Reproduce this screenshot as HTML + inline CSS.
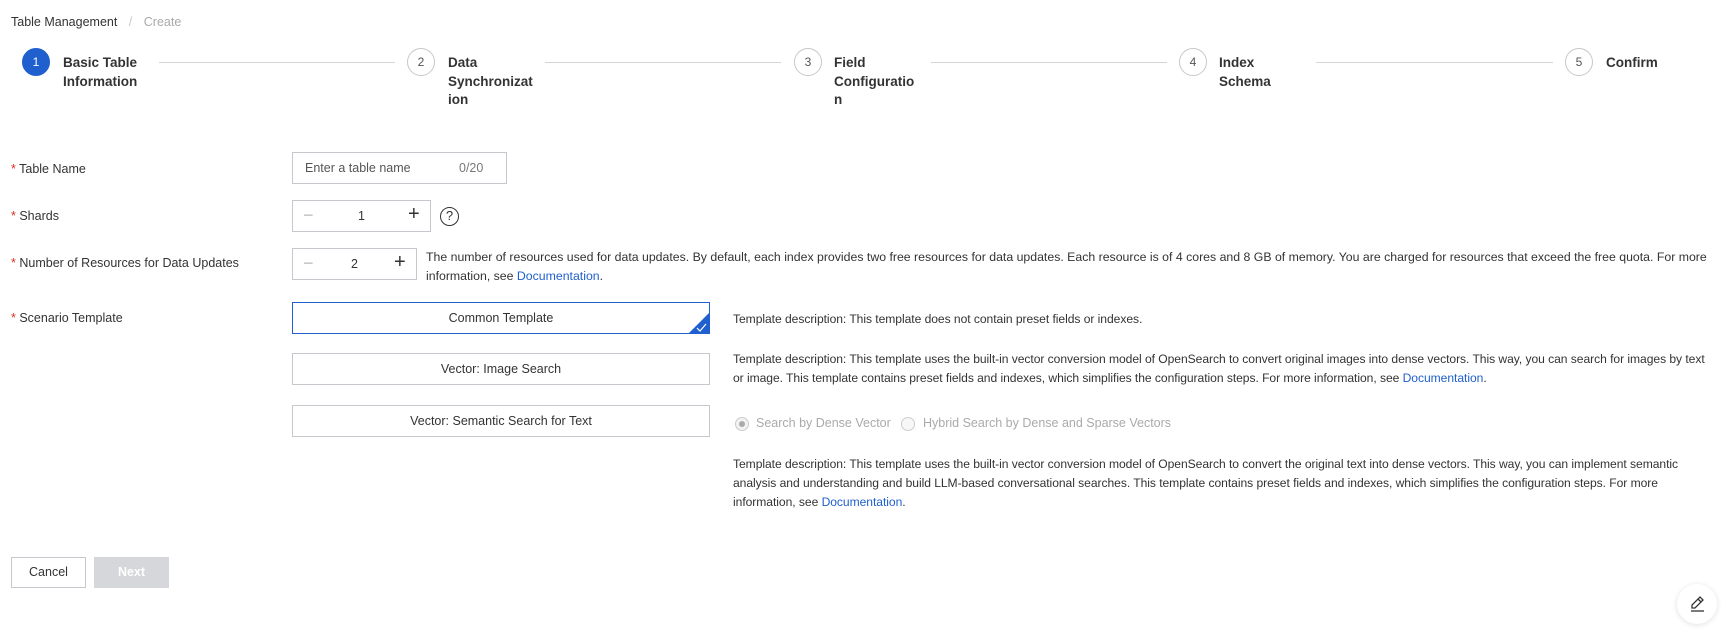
<!DOCTYPE html>
<html><head><meta charset="utf-8"><style>
*{box-sizing:border-box;margin:0;padding:0}
body{width:1721px;height:631px;background:#fff;font-family:"Liberation Sans",sans-serif;color:#333;position:relative;overflow:hidden;font-size:12px}
.a{position:absolute;white-space:nowrap}
.circ{position:absolute;width:28px;height:28px;border-radius:50%;border:1px solid #c8c8c8;color:#555;font-size:12px;text-align:center;line-height:26px;background:#fff}
.circ.on{background:#1f5fce;border-color:#1f5fce;color:#fff}
.st{position:absolute;font-size:13.5px;font-weight:bold;color:#333;line-height:18.6px}
.ln{position:absolute;height:1px;background:#d5d5d5;top:62px}
.lbl{position:absolute;left:11px;font-size:12.5px;color:#333;line-height:16px}
.lbl b{color:#d93026;font-weight:normal}
.box{position:absolute;border:1px solid #c5c8cc;background:#fff}
.tpl{position:absolute;left:292px;width:418px;height:32px;border:1px solid #c5c8cc;text-align:center;line-height:30px;font-size:12.5px;color:#333}
.d{position:absolute;left:733px;font-size:12.1px;line-height:19px;letter-spacing:-0.05px;white-space:nowrap;color:#333}
.lk{color:#1f5fce}
</style></head><body>
<div class="a" style="left:11px;top:15px;font-size:12.5px;color:#333">Table Management <span style="color:#c8c8c8;margin:0 8px">/</span> <span style="color:#aaa">Create</span></div>

<div class="circ on" style="left:22px;top:48px">1</div>
<div class="st" style="left:63px;top:54px">Basic Table<br>Information</div>
<div class="ln" style="left:159px;width:236px"></div>
<div class="circ" style="left:407px;top:48px">2</div>
<div class="st" style="left:448px;top:54px">Data<br>Synchronizat<br>ion</div>
<div class="ln" style="left:545px;width:236px"></div>
<div class="circ" style="left:794px;top:48px">3</div>
<div class="st" style="left:834px;top:54px">Field<br>Configuratio<br>n</div>
<div class="ln" style="left:931px;width:236px"></div>
<div class="circ" style="left:1179px;top:48px">4</div>
<div class="st" style="left:1219px;top:54px">Index<br>Schema</div>
<div class="ln" style="left:1316px;width:237px"></div>
<div class="circ" style="left:1565px;top:48px">5</div>
<div class="st" style="left:1606px;top:54px">Confirm</div>

<div class="lbl" style="top:161px"><b>*</b> Table Name</div>
<div class="lbl" style="top:208px"><b>*</b> Shards</div>
<div class="lbl" style="top:255px"><b>*</b> Number of Resources for Data Updates</div>
<div class="lbl" style="top:310px"><b>*</b> Scenario Template</div>

<div class="box" style="left:292px;top:152px;width:215px;height:32px"></div>
<div class="a" style="left:305px;top:161px;font-size:12.5px;color:#555">Enter a table name</div>
<div class="a" style="left:459px;top:161px;font-size:12.5px;color:#777">0/20</div>

<div class="box" style="left:292px;top:200px;width:139px;height:32px"></div>
<div class="a" style="left:303px;top:205px;font-size:18px;color:#bbb">−</div>
<div class="a" style="left:358px;top:209px;font-size:12.5px">1</div>
<div class="a" style="left:408px;top:203px;font-size:20px;color:#333">+</div>
<div class="a" style="left:440px;top:207px;width:19px;height:19px;border:1.5px solid #333;border-radius:50%;text-align:center;font-size:13px;line-height:16px">?</div>

<div class="box" style="left:292px;top:248px;width:125px;height:32px"></div>
<div class="a" style="left:303px;top:253px;font-size:18px;color:#bbb">−</div>
<div class="a" style="left:351px;top:257px;font-size:12.5px">2</div>
<div class="a" style="left:394px;top:251px;font-size:20px;color:#333">+</div>
<div class="a" style="left:426px;top:248px;font-size:12.3px;line-height:19px">The number of resources used for data updates. By default, each index provides two free resources for data updates. Each resource is of 4 cores and 8 GB of memory. You are charged for resources that exceed the free quota. For more<br>information, see <span class="lk">Documentation</span>.</div>

<div class="tpl" style="top:302px;border-color:#1f5fce">Common Template
<svg style="position:absolute;right:-1px;bottom:-1px" width="22" height="22"><polygon points="22,0 22,22 0,22" fill="#1f5fce"/><polyline points="9,16 12,19 18,12" fill="none" stroke="#fff" stroke-width="1.2"/></svg></div>
<div class="tpl" style="top:353px">Vector: Image Search</div>
<div class="tpl" style="top:405px">Vector: Semantic Search for Text</div>

<div class="d" style="top:310px">Template description: This template does not contain preset fields or indexes.</div>
<div class="d" style="top:350px">Template description: This template uses the built-in vector conversion model of OpenSearch to convert original images into dense vectors. This way, you can search for images by text<br>or image. This template contains preset fields and indexes, which simplifies the configuration steps. For more information, see <span class="lk">Documentation</span>.</div>

<div class="a" style="left:735px;top:417px;width:14px;height:14px;border:1px solid #ccc;border-radius:50%;background:#f2f2f2"><div style="width:6px;height:6px;border-radius:50%;background:#aaa;margin:3px"></div></div>
<div class="a" style="left:756px;top:416px;font-size:12.5px;color:#aaa">Search by Dense Vector</div>
<div class="a" style="left:901px;top:417px;width:14px;height:14px;border:1px solid #ccc;border-radius:50%;background:#f7f7f7"></div>
<div class="a" style="left:923px;top:416px;font-size:12.5px;color:#aaa">Hybrid Search by Dense and Sparse Vectors</div>

<div class="d" style="top:455px">Template description: This template uses the built-in vector conversion model of OpenSearch to convert the original text into dense vectors. This way, you can implement semantic<br>analysis and understanding and build LLM-based conversational searches. This template contains preset fields and indexes, which simplifies the configuration steps. For more<br>information, see <span class="lk">Documentation</span>.</div>

<div class="a" style="left:11px;top:557px;width:75px;height:31px;border:1px solid #c5c8cc;text-align:center;line-height:29px;font-size:12.5px;color:#333">Cancel</div>
<div class="a" style="left:94px;top:557px;width:75px;height:31px;background:#d5d7da;text-align:center;line-height:31px;font-size:12.5px;color:#fff;font-weight:bold">Next</div>

<div class="a" style="left:1677px;top:584px;width:40px;height:40px;border-radius:50%;background:#fff;box-shadow:0 1px 6px rgba(0,0,0,.12)">
<svg width="40" height="40"><path d="M15 24 L15 21 L23 13 L26 16 L18 24 Z M21 15 L24 18" fill="none" stroke="#333" stroke-width="1.3"/><line x1="14" y1="27" x2="27" y2="27" stroke="#333" stroke-width="1.3"/></svg></div>
</body></html>
